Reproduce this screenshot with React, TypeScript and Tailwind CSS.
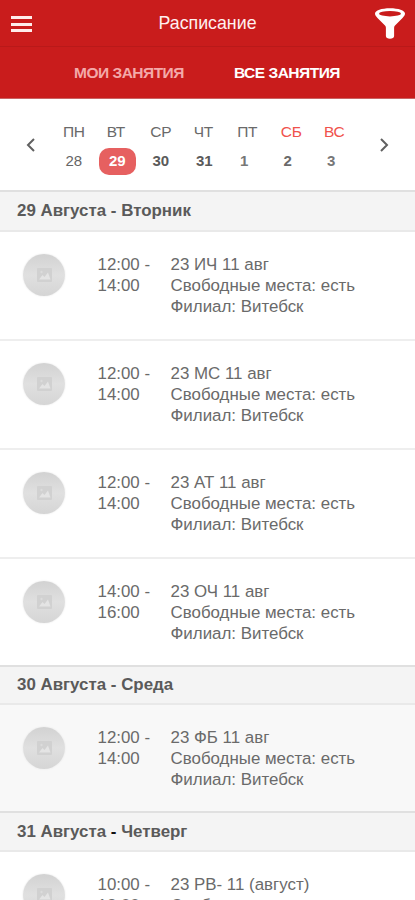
import React from 'react';

interface Day {
  name: string;
  date: number;
  nameClass: string;
  dateClass: string;
}

interface Lesson {
  from: string;
  to: string;
  title: string;
}

interface Section {
  date: string;
  weekday: string;
  dashClass?: string;
  headerClass: string;
  rowClass: string;
  lessons: Lesson[];
}

const days: Day[] = [
  { name: 'ПН', date: 28, nameClass: '', dateClass: 'text-[#666]' },
  { name: 'ВТ', date: 29, nameClass: 'pr-[3px]', dateClass: 'bg-[#e66060] font-bold text-white' },
  { name: 'СР', date: 30, nameClass: '', dateClass: 'font-bold text-[#5a5a5a]' },
  { name: 'ЧТ', date: 31, nameClass: 'pr-[2px]', dateClass: 'font-bold text-[#5a5a5a]' },
  { name: 'ПТ', date: 1, nameClass: 'pr-px', dateClass: 'pr-[7px] font-bold text-[#777]' },
  { name: 'СБ', date: 2, nameClass: 'text-[#f0524c]', dateClass: 'pr-[7px] font-bold text-[#6a6a6a]' },
  { name: 'ВС', date: 3, nameClass: 'pr-px text-[#f0524c]', dateClass: 'pr-[7px] font-bold text-[#777]' },
];

const sections: Section[] = [
  {
    date: '29 Августа',
    weekday: 'Вторник',
    headerClass: 'h-[42px]',
    rowClass: 'h-[109px] bg-white last:h-[106px]',
    lessons: [
      { from: '12:00', to: '14:00', title: '23 ИЧ 11 авг' },
      { from: '12:00', to: '14:00', title: '23 МС 11 авг' },
      { from: '12:00', to: '14:00', title: '23 АТ 11 авг' },
      { from: '14:00', to: '16:00', title: '23 ОЧ 11 авг' },
    ],
  },
  {
    date: '30 Августа',
    weekday: 'Среда',
    headerClass: 'h-10',
    rowClass: 'h-[106px] bg-[#f8f8f8]',
    lessons: [{ from: '12:00', to: '14:00', title: '23 ФБ 11 авг' }],
  },
  {
    date: '31 Августа',
    weekday: 'Четверг',
    dashClass: 'text-[#111]',
    headerClass: 'h-[41px]',
    rowClass: 'h-[109px] bg-white',
    lessons: [{ from: '10:00', to: '12:00', title: '23 РВ- 11 (август)' }],
  },
];

const FunnelIcon: React.FC = () => (
  <svg width="32" height="32" viewBox="0 0 32 32" fill="none">
    <path
      d="M1 6.600C1 3.300 7.600 1.200 16 1.200s15 2.100 15 5.400c0 1.600-1 2.800-2.500 4.400L21 18.500c-.6.700-.9 1.300-.9 2.200v8.300c0 1.700-1.700 2.700-4.100 2.700s-4.100-1-4.100-2.700v-8.300c0-.9-.3-1.500-.9-2.200L3.500 11C2 9.400 1 8.200 1 6.600Z"
      fill="#fff"
    />
    <ellipse cx="16" cy="6.700" rx="11" ry="2.700" fill="#c91c1c" />
  </svg>
);

const Chevron: React.FC<{ d: string }> = ({ d }) => (
  <svg width="10" height="14" viewBox="0 0 10 14" fill="none" stroke="#606060" strokeWidth="2">
    <path d={d} />
  </svg>
);

const Avatar: React.FC = () => (
  <div className="flex h-[42px] w-[42px] items-center justify-center rounded-full bg-linear-to-b from-[#d2d2d2] via-[#e0e0e0] to-[#d5d5d5] shadow-[0_0_2px_#e4e4e4]">
    <svg width="15" height="14" viewBox="0 0 15 14" fill="none">
      <rect width="15" height="14" rx="1" fill="#d1d1d1" />
      <path d="M2 11.500 5.500 7l2 2L11 4.500l2.500 7Z" fill="#e4e4e4" />
      <circle cx="4.500" cy="4" r="1.200" fill="#dcdcdc" />
    </svg>
  </div>
);

const LessonRow: React.FC<{ lesson: Lesson; className: string }> = ({ lesson, className }) => (
  <div
    className={`flex border-b-2 border-[#eeeeee] pl-[23px] text-[16.9px] leading-[21.2px] text-[#6a6a6a] last:border-b-0 ${className}`}
  >
    <div className="w-[74.5px] shrink-0 pt-[22px]">
      <Avatar />
    </div>
    <div className="w-[73px] shrink-0 pt-[22px]">
      <div>{lesson.from} -</div>
      <div>{lesson.to}</div>
    </div>
    <div className="pt-[22px] whitespace-nowrap">
      <div>{lesson.title}</div>
      <div>Свободные места: есть</div>
      <div>Филиал: Витебск</div>
    </div>
  </div>
);

const App: React.FC = () => {
  return (
    <div className="h-[900px] w-full overflow-hidden bg-white font-['Liberation_Sans',Arial,sans-serif]">
      <header className="flex h-[47px] items-center justify-between border-b border-[#b91919] bg-[#c91c1c] pr-[9px] pl-[11px] text-white">
        <div className="flex w-[30px] flex-col gap-[3.5px] pt-[2px]">
          <span className="h-[3px] w-[21px] bg-[#ffeceb]" />
          <span className="h-[3px] w-[21px] bg-[#ffeceb]" />
          <span className="h-[3px] w-[21px] bg-[#ffeceb]" />
        </div>
        <h1 className="text-[17.8px] text-[#fff0f0]">Расписание</h1>
        <FunnelIcon />
      </header>

      <nav className="flex h-[52px] items-center border-b border-[#c96363] bg-[#c91c1c] pl-[74px] text-[15.5px] font-bold tracking-[-0.5px] text-white">
        <span className="w-40 text-[#f3a9a9]">МОИ ЗАНЯТИЯ</span>
        <span>ВСЕ ЗАНЯТИЯ</span>
      </nav>

      <div className="flex h-[91px] items-center px-[26px] text-[#6a6a6a]">
        <Chevron d="M8 1 2 7l6 6" />
        <div className="ml-4 flex grow pt-[8px]">
          {days.map((day) => (
            <div key={day.name} className="flex w-[43.5px] flex-col items-center">
              <div className={`h-[18px] text-[15.5px] leading-[18px] tracking-[-0.3px] ${day.nameClass}`}>
                {day.name}
              </div>
              <div
                className={`mt-[7px] flex h-[27px] w-[37px] items-center justify-center rounded-[10px] text-[15px] ${day.dateClass}`}
              >
                {day.date}
              </div>
            </div>
          ))}
        </div>
        <Chevron d="M2 1l6 6-6 6" />
      </div>

      {sections.map((section) => (
        <section key={section.date}>
          <h2
            className={`flex items-center border-y-2 border-t-[#e0e0e0] border-b-[#e9e9e9] bg-[#f4f4f4] pl-[17px] text-[16.9px] font-bold text-[#5a5a5a] ${section.headerClass}`}
          >
            <span>
              {section.date} <span className={section.dashClass}>-</span> {section.weekday}
            </span>
          </h2>
          {section.lessons.map((lesson) => (
            <LessonRow key={lesson.title} lesson={lesson} className={section.rowClass} />
          ))}
        </section>
      ))}
    </div>
  );
};

export default App;
